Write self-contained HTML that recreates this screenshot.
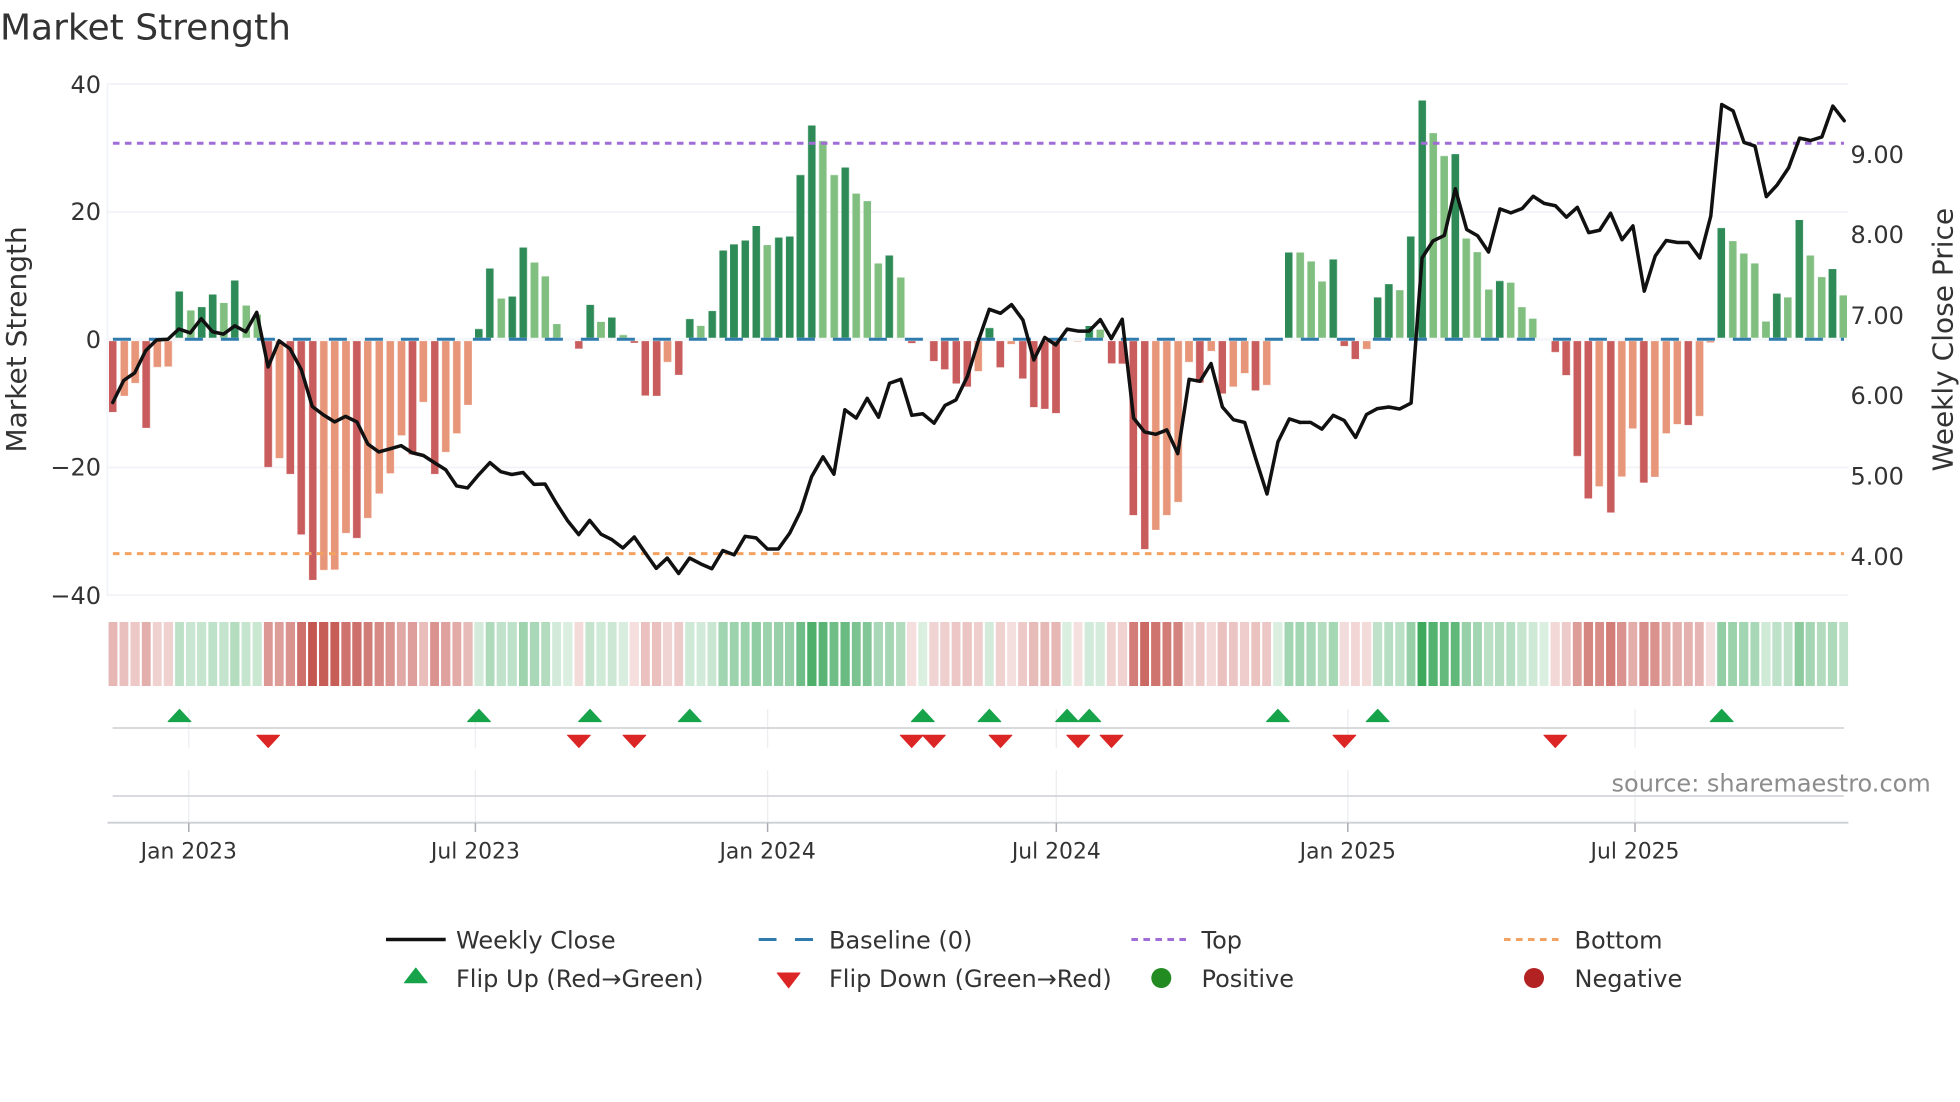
<!DOCTYPE html>
<html><head><meta charset="utf-8"><title>Market Strength</title>
<style>
html,body{margin:0;padding:0;background:#fff}
body{position:relative;width:1960px;height:1102px;overflow:hidden}
svg.l{position:absolute;left:0;top:0}
text{font-family:"DejaVu Sans","Liberation Sans",sans-serif;fill:#333}
.bars{position:absolute;left:0;top:339.6px;width:5000px;height:0;padding-left:259.2px;display:flex;align-items:flex-start;transform-origin:0 0;transform:scale(.42088,.39541)}
.bars i{display:block;flex:none;width:18px;margin-right:8.362px}
.a{background:#2e8b57;transform:translateY(-100%)}
.b{background:#81bf80;transform:translateY(-100%)}
.c{background:#c95c5c}
.d{background:#e8967a}
.heat{position:absolute;left:0;top:622px;width:5000px;height:64px;padding-left:257.5px;display:flex;transform-origin:0 0;transform:scaleX(.42088)}
.heat i{display:block;flex:none;width:21.5px;height:64px;margin-right:4.86px}
.u{background:#3aa65a}
.r{background:#c4544e}
</style></head>
<body>
<svg class="l" width="1960" height="1102" viewBox="0 0 1960 1102">
<g stroke="#f3f4f7" stroke-width="2" fill="none">
<path d="M107.5 84H1848.4M107.5 211.9H1848.4M107.5 467.4H1848.4M107.5 595.1H1848.4M107.5 83V596"/>
</g>
<g stroke="#eceef2" stroke-width="1.3" fill="none">
<path d="M188.8 709V747.7M188.8 770V822.7M475.4 709V747.7M475.4 770V822.7M767.6 709V747.7M767.6 770V822.7M1056.3 709V747.7M1056.3 770V822.7M1347.8 709V747.7M1347.8 770V822.7M1635 709V747.7M1635 770V822.7"/>
</g>
</svg>

<div class="bars"><i class=c style=height:182px></i><i class=d style=height:141px></i><i class=d style=height:109px></i><i class=c style=height:222px></i><i class=d style=height:68px></i><i class=d style=height:67px></i><i class=a style=height:123px></i><i class=b style=height:75px></i><i class=a style=height:83px></i><i class=a style=height:115px></i><i class=b style=height:94px></i><i class=a style=height:151px></i><i class=b style=height:87px></i><i class=b style=height:65px></i><i class=c style=height:321px></i><i class=d style=height:299px></i><i class=c style=height:339px></i><i class=c style=height:492px></i><i class=c style=height:607px></i><i class=d style=height:582px></i><i class=d style=height:581px></i><i class=d style=height:488px></i><i class=c style=height:501px></i><i class=d style=height:450px></i><i class=d style=height:388px></i><i class=d style=height:337px></i><i class=d style=height:241px></i><i class=c style=height:289px></i><i class=d style=height:157px></i><i class=c style=height:339px></i><i class=d style=height:283px></i><i class=d style=height:236px></i><i class=d style=height:164px></i><i class=a style=height:28px></i><i class=a style=height:181px></i><i class=b style=height:105px></i><i class=a style=height:110px></i><i class=a style=height:234px></i><i class=b style=height:196px></i><i class=b style=height:161px></i><i class=b style=height:40px></i><i class=b style=height:3px></i><i class=c style=height:22px></i><i class=a style=height:89px></i><i class=b style=height:46px></i><i class=a style=height:57px></i><i class=b style=height:13px></i><i class=c style=height:7px></i><i class=c style=height:140px></i><i class=c style=height:141px></i><i class=d style=height:56px></i><i class=c style=height:88px></i><i class=a style=height:53px></i><i class=b style=height:36px></i><i class=a style=height:73px></i><i class=a style=height:226px></i><i class=a style=height:242px></i><i class=a style=height:252px></i><i class=a style=height:288px></i><i class=b style=height:240px></i><i class=a style=height:259px></i><i class=a style=height:262px></i><i class=a style=height:417px></i><i class=a style=height:543px></i><i class=b style=height:503px></i><i class=b style=height:417px></i><i class=a style=height:436px></i><i class=b style=height:370px></i><i class=b style=height:351px></i><i class=b style=height:194px></i><i class=a style=height:214px></i><i class=b style=height:158px></i><i class=c style=height:8px></i><i class=b style=height:1px></i><i class=c style=height:53px></i><i class=c style=height:74px></i><i class=c style=height:110px></i><i class=c style=height:118px></i><i class=d style=height:79px></i><i class=a style=height:30px></i><i class=c style=height:69px></i><i class=d style=height:10px></i><i class=c style=height:97px></i><i class=c style=height:170px></i><i class=c style=height:174px></i><i class=c style=height:185px></i><i class=b style=height:1px></i><i class=d style=height:4px></i><i class=a style=height:36px></i><i class=b style=height:26px></i><i class=c style=height:59px></i><i class=c style=height:60px></i><i class=c style=height:443px></i><i class=c style=height:529px></i><i class=d style=height:480px></i><i class=d style=height:443px></i><i class=d style=height:410px></i><i class=d style=height:56px></i><i class=c style=height:108px></i><i class=d style=height:28px></i><i class=c style=height:135px></i><i class=d style=height:118px></i><i class=d style=height:84px></i><i class=c style=height:128px></i><i class=d style=height:114px></i><i class=b style=height:1px></i><i class=a style=height:221px></i><i class=b style=height:221px></i><i class=b style=height:199px></i><i class=b style=height:148px></i><i class=a style=height:204px></i><i class=c style=height:15px></i><i class=c style=height:48px></i><i class=d style=height:23px></i><i class=a style=height:108px></i><i class=a style=height:141px></i><i class=b style=height:126px></i><i class=a style=height:262px></i><i class=a style=height:606px></i><i class=b style=height:523px></i><i class=b style=height:465px></i><i class=a style=height:470px></i><i class=b style=height:257px></i><i class=b style=height:222px></i><i class=b style=height:128px></i><i class=a style=height:149px></i><i class=b style=height:145px></i><i class=b style=height:83px></i><i class=b style=height:54px></i><i class=b style=height:1px></i><i class=c style=height:30px></i><i class=c style=height:89px></i><i class=c style=height:293px></i><i class=c style=height:401px></i><i class=d style=height:370px></i><i class=c style=height:436px></i><i class=d style=height:345px></i><i class=d style=height:224px></i><i class=c style=height:361px></i><i class=d style=height:346px></i><i class=d style=height:236px></i><i class=d style=height:213px></i><i class=c style=height:215px></i><i class=d style=height:192px></i><i class=d style=height:6px></i><i class=a style=height:283px></i><i class=b style=height:250px></i><i class=b style=height:219px></i><i class=b style=height:194px></i><i class=b style=height:47px></i><i class=a style=height:117px></i><i class=b style=height:108px></i><i class=a style=height:303px></i><i class=b style=height:214px></i><i class=b style=height:159px></i><i class=a style=height:179px></i><i class=b style=height:113px></i></div>

<div class="heat"><i class=r style=opacity:.42></i><i class=r style=opacity:.37></i><i class=r style=opacity:.32></i><i class=r style=opacity:.47></i><i class=r style=opacity:.27></i><i class=r style=opacity:.27></i><i class=u style=opacity:.34></i><i class=u style=opacity:.28></i><i class=u style=opacity:.29></i><i class=u style=opacity:.33></i><i class=u style=opacity:.3></i><i class=u style=opacity:.38></i><i class=u style=opacity:.29></i><i class=u style=opacity:.27></i><i class=r style=opacity:.6></i><i class=r style=opacity:.57></i><i class=r style=opacity:.63></i><i class=r style=opacity:.83></i><i class=r style=opacity:.98></i><i class=r style=opacity:.95></i><i class=r style=opacity:.95></i><i class=r style=opacity:.82></i><i class=r style=opacity:.84></i><i class=r style=opacity:.77></i><i class=r style=opacity:.69></i><i class=r style=opacity:.62></i><i class=r style=opacity:.5></i><i class=r style=opacity:.56></i><i class=r style=opacity:.39></i><i class=r style=opacity:.63></i><i class=r style=opacity:.55></i><i class=r style=opacity:.49></i><i class=r style=opacity:.4></i><i class=u style=opacity:.22></i><i class=u style=opacity:.42></i><i class=u style=opacity:.32></i><i class=u style=opacity:.33></i><i class=u style=opacity:.49></i><i class=u style=opacity:.44></i><i class=u style=opacity:.39></i><i class=u style=opacity:.23></i><i class=u style=opacity:.18></i><i class=r style=opacity:.21></i><i class=u style=opacity:.3></i><i class=u style=opacity:.24></i><i class=u style=opacity:.26></i><i class=u style=opacity:.2></i><i class=r style=opacity:.19></i><i class=r style=opacity:.36></i><i class=r style=opacity:.37></i><i class=r style=opacity:.25></i><i class=r style=opacity:.3></i><i class=u style=opacity:.25></i><i class=u style=opacity:.23></i><i class=u style=opacity:.28></i><i class=u style=opacity:.48></i><i class=u style=opacity:.5></i><i class=u style=opacity:.51></i><i class=u style=opacity:.56></i><i class=u style=opacity:.5></i><i class=u style=opacity:.52></i><i class=u style=opacity:.53></i><i class=u style=opacity:.73></i><i class=u style=opacity:.9></i><i class=u style=opacity:.84></i><i class=u style=opacity:.73></i><i class=u style=opacity:.76></i><i class=u style=opacity:.67></i><i class=u style=opacity:.64></i><i class=u style=opacity:.44></i><i class=u style=opacity:.46></i><i class=u style=opacity:.39></i><i class=r style=opacity:.19></i><i class=u style=opacity:.18></i><i class=r style=opacity:.25></i><i class=r style=opacity:.28></i><i class=r style=opacity:.33></i><i class=r style=opacity:.34></i><i class=r style=opacity:.28></i><i class=u style=opacity:.22></i><i class=r style=opacity:.27></i><i class=r style=opacity:.19></i><i class=r style=opacity:.31></i><i class=r style=opacity:.4></i><i class=r style=opacity:.41></i><i class=r style=opacity:.42></i><i class=u style=opacity:.18></i><i class=r style=opacity:.18></i><i class=u style=opacity:.23></i><i class=u style=opacity:.21></i><i class=r style=opacity:.26></i><i class=r style=opacity:.26></i><i class=r style=opacity:.76></i><i class=r style=opacity:.88></i><i class=r style=opacity:.81></i><i class=r style=opacity:.76></i><i class=r style=opacity:.72></i><i class=r style=opacity:.25></i><i class=r style=opacity:.32></i><i class=r style=opacity:.22></i><i class=r style=opacity:.36></i><i class=r style=opacity:.34></i><i class=r style=opacity:.29></i><i class=r style=opacity:.35></i><i class=r style=opacity:.33></i><i class=u style=opacity:.18></i><i class=u style=opacity:.47></i><i class=u style=opacity:.47></i><i class=u style=opacity:.44></i><i class=u style=opacity:.38></i><i class=u style=opacity:.45></i><i class=r style=opacity:.2></i><i class=r style=opacity:.24></i><i class=r style=opacity:.21></i><i class=u style=opacity:.32></i><i class=u style=opacity:.37></i><i class=u style=opacity:.35></i><i class=u style=opacity:.53></i><i class=u style=opacity:.98></i><i class=u style=opacity:.87></i><i class=u style=opacity:.79></i><i class=u style=opacity:.8></i><i class=u style=opacity:.52></i><i class=u style=opacity:.47></i><i class=u style=opacity:.35></i><i class=u style=opacity:.38></i><i class=u style=opacity:.37></i><i class=u style=opacity:.29></i><i class=u style=opacity:.25></i><i class=u style=opacity:.18></i><i class=r style=opacity:.22></i><i class=r style=opacity:.3></i><i class=r style=opacity:.57></i><i class=r style=opacity:.71></i><i class=r style=opacity:.67></i><i class=r style=opacity:.76></i><i class=r style=opacity:.64></i><i class=r style=opacity:.48></i><i class=r style=opacity:.66></i><i class=r style=opacity:.64></i><i class=r style=opacity:.49></i><i class=r style=opacity:.46></i><i class=r style=opacity:.46></i><i class=r style=opacity:.43></i><i class=r style=opacity:.19></i><i class=u style=opacity:.55></i><i class=u style=opacity:.51></i><i class=u style=opacity:.47></i><i class=u style=opacity:.44></i><i class=u style=opacity:.24></i><i class=u style=opacity:.33></i><i class=u style=opacity:.32></i><i class=u style=opacity:.58></i><i class=u style=opacity:.46></i><i class=u style=opacity:.39></i><i class=u style=opacity:.42></i><i class=u style=opacity:.33></i></div>

<svg class="l" width="1960" height="1102" viewBox="0 0 1960 1102">
<!-- zero band / baseline / top / bottom -->
<path d="M107.5 339.4H1848.4" stroke="#f6f7f9" stroke-width="3.4" fill="none"/>
<path d="M112.9 339.2H1844" stroke="#2f7bad" stroke-width="3" stroke-dasharray="18 18" fill="none"/>
<path d="M112.9 143.2H1844" stroke="#a06cd5" stroke-width="3" stroke-dasharray="6.6 5.4" fill="none"/>
<path d="M112.9 553.6H1844" stroke="#f4a261" stroke-width="3" stroke-dasharray="6.6 5.4" fill="none"/>

<!-- weekly close -->
<g fill="none" stroke="#111" stroke-width="3.5" stroke-linejoin="round" stroke-linecap="round">
<polyline vector-effect="non-scaling-stroke" transform="scale(.42088,.39541)" points="268,1018 294,962 320,943 346,887 372,860 399,858 425,832 452,842 478,806 505,839 531,845 558,824 584,839 610,790 637,928 663,862 689,882 716,935 742,1028 768,1049 795,1067 821,1053 848,1067 874,1123 900,1143 927,1135 953,1127 979,1145 1006,1152 1032,1170 1059,1188 1085,1229 1111,1234 1137,1201 1164,1170 1190,1193 1216,1200 1243,1195 1269,1225 1295,1224 1322,1273 1348,1316 1375,1352 1401,1316 1428,1351 1454,1365 1480,1386 1507,1358 1533,1398 1559,1437"/>
<polyline vector-effect="non-scaling-stroke" transform="translate(650,80) scale(.42088,.39541)" points="15,1235 41,1209 68,1248 94,1209 121,1224 147,1236 173,1190 200,1201 226,1154 252,1158 279,1186 305,1186 332,1146 358,1090 384,1003 411,953 437,997 463,834 490,855 516,805 543,853 569,767 596,757 622,848 648,844 675,868 701,823 727,809 754,750 780,660 806,580 833,590 859,568 886,607 912,708 938,651 964,670 991,630 1017,635 1043,635 1070,606 1096,654 1122,605 1149,855 1175,890 1202,896 1228,885 1254,945 1281,757 1307,762 1333,717 1360,827 1386,859 1413,866 1439,957 1466,1047 1492,915 1519,857 1545,866"/>
<polyline vector-effect="non-scaling-stroke" transform="translate(1300,80) scale(.42088,.39541)" points="-1,866 25,866 52,883 79,848 105,861 132,904 158,846 184,831 211,827 237,832 264,817 290,450 316,407 343,393 369,275 396,378 422,394 448,435 475,326 501,336 528,325 554,294 580,312 607,318 633,347 659,322 686,386 712,380 738,337 765,404 791,369 818,534 844,445 870,406 897,411 923,411 950,450 976,344 1002,62 1029,78 1055,158 1081,167 1108,295 1134,265 1161,222 1187,147 1213,153 1240,144 1266,66 1293,103"/>
</g>

<!-- flip rows -->
<path d="M112.6 728H1843.8M112.6 796H1843.8" stroke="#d3d5d9" stroke-width="1.8" fill="none"/>
<path d="M107.5 822.7H1848.4" stroke="#cdcfd4" stroke-width="1.8" fill="none"/>
<path d="M188.8 823V832M475.4 823V832M767.6 823V832M1056.3 823V832M1347.8 823V832M1635 823V832" stroke="#a9acb2" stroke-width="1.5" fill="none"/>

<g fill="#16a34a" stroke="#16a34a" stroke-width="1" stroke-linejoin="round">
<polygon points="179.5,709.3 168.1,721.6 190.9,721.6"/>
<polygon points="479,709.3 467.6,721.6 490.4,721.6"/>
<polygon points="590,709.3 578.6,721.6 601.4,721.6"/>
<polygon points="689.8,709.3 678.4,721.6 701.2,721.6"/>
<polygon points="922.8,709.3 911.4,721.6 934.2,721.6"/>
<polygon points="989.4,709.3 978,721.6 1000.8,721.6"/>
<polygon points="1067.1,709.3 1055.7,721.6 1078.5,721.6"/>
<polygon points="1089.3,709.3 1077.9,721.6 1100.7,721.6"/>
<polygon points="1277.9,709.3 1266.5,721.6 1289.3,721.6"/>
<polygon points="1377.7,709.3 1366.3,721.6 1389.1,721.6"/>
<polygon points="1721.7,709.3 1710.3,721.6 1733.1,721.6"/>
</g>
<g fill="#dc2626" stroke="#dc2626" stroke-width="1" stroke-linejoin="round">
<polygon points="268.2,747.5 256.8,735.2 279.6,735.2"/>
<polygon points="578.9,747.5 567.5,735.2 590.3,735.2"/>
<polygon points="634.4,747.5 623,735.2 645.8,735.2"/>
<polygon points="911.7,747.5 900.3,735.2 923.1,735.2"/>
<polygon points="933.9,747.5 922.5,735.2 945.3,735.2"/>
<polygon points="1000.5,747.5 989.1,735.2 1011.9,735.2"/>
<polygon points="1078.2,747.5 1066.8,735.2 1089.6,735.2"/>
<polygon points="1111.5,747.5 1100.1,735.2 1122.9,735.2"/>
<polygon points="1344.4,747.5 1333,735.2 1355.8,735.2"/>
<polygon points="1555.3,747.5 1543.9,735.2 1566.7,735.2"/>
</g>

<!-- title -->
<text x="0" y="39.5" font-size="36">Market Strength</text>

<!-- left y axis -->
<g font-size="24" text-anchor="end">
<text x="101" y="93">40</text>
<text x="101" y="220">20</text>
<text x="101" y="348">0</text>
<text x="101" y="475.5">−20</text>
<text x="101" y="604">−40</text>
</g>
<text font-size="28" text-anchor="middle" transform="translate(26,339.4) rotate(-90)">Market Strength</text>

<!-- right y axis -->
<g font-size="24">
<text x="1850.5" y="163">9.00</text>
<text x="1850.5" y="243">8.00</text>
<text x="1850.5" y="323.8">7.00</text>
<text x="1850.5" y="404.2">6.00</text>
<text x="1850.5" y="484.4">5.00</text>
<text x="1850.5" y="565">4.00</text>
</g>
<text font-size="28" text-anchor="middle" transform="translate(1952.5,339.6) rotate(-90)">Weekly Close Price</text>

<!-- x axis -->
<g font-size="21.875" text-anchor="middle">
<text x="188.8" y="858.3">Jan 2023</text>
<text x="475.4" y="858.3">Jul 2023</text>
<text x="767.6" y="858.3">Jan 2024</text>
<text x="1056.3" y="858.3">Jul 2024</text>
<text x="1347.8" y="858.3">Jan 2025</text>
<text x="1635" y="858.3">Jul 2025</text>
</g>

<text x="1611.5" y="791.7" font-size="24" style="fill:#8c8c8c">source: sharemaestro.com</text>

<!-- legend -->
<path d="M386 939.5H445.7" stroke="#111" stroke-width="3.5" fill="none"/>
<path d="M758.7 939.5H776.5M795 939.5H813" stroke="#2f7bad" stroke-width="3" fill="none"/>
<path d="M1131.4 939.5H1186.3" stroke="#a06cd5" stroke-width="3" stroke-dasharray="6.6 5.4" fill="none"/>
<path d="M1504 939.5H1559" stroke="#f4a261" stroke-width="3" stroke-dasharray="6.6 5.4" fill="none"/>
<polygon points="415.8,968 404.4,982.8 427.2,982.8" fill="#16a34a" stroke="#16a34a" stroke-width="1" stroke-linejoin="round"/>
<polygon points="788.6,987.8 777.2,973 800,973" fill="#dc2626" stroke="#dc2626" stroke-width="1" stroke-linejoin="round"/>
<circle cx="1161.3" cy="978" r="10" fill="#228b22"/>
<circle cx="1534" cy="978" r="10" fill="#b22222"/>
<g font-size="24">
<text x="456" y="948.3">Weekly Close</text>
<text x="829" y="948.3">Baseline (0)</text>
<text x="1201.5" y="948.3">Top</text>
<text x="1574.5" y="948.3">Bottom</text>
<text x="456" y="986.8">Flip Up (Red→Green)</text>
<text x="829" y="986.8">Flip Down (Green→Red)</text>
<text x="1201.5" y="986.8">Positive</text>
<text x="1574.5" y="986.8">Negative</text>
</g>
</svg>
</body></html>
